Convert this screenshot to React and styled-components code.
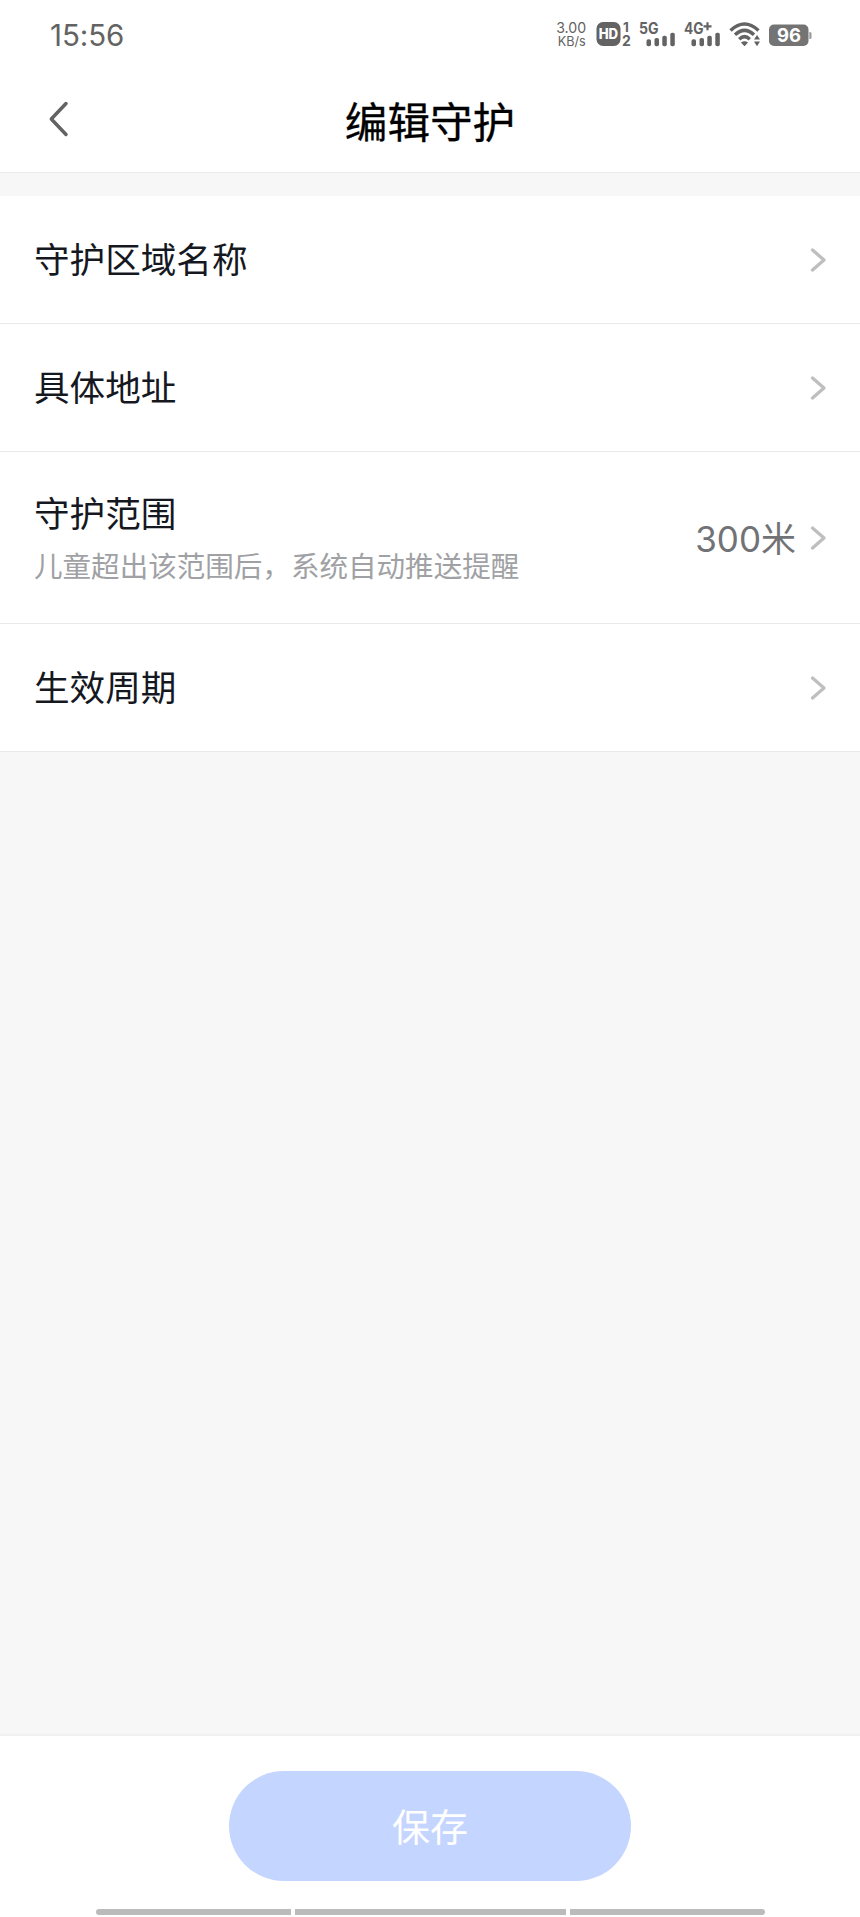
import React from "react";
import styled, { createGlobalStyle } from "styled-components";

const GlobalStyle = createGlobalStyle`
  * { box-sizing: border-box; }
  body {
    margin: 0;
    background: #fff;
    font-family: Inter, "Noto Sans CJK SC", sans-serif;
  }
`;

const Screen = styled.div`
  width: 860px;
  height: 1917px;
  display: flex;
  flex-direction: column;
  background: #f7f7f7;
  overflow: hidden;
`;

const StatusBar = styled.header`
  height: 70px;
  padding: 0 48px 3px 50px;
  display: flex;
  align-items: center;
  justify-content: space-between;
  background: #fff;
  color: #636363;
`;

const Clock = styled.time`
  font-size: 29.5px;
  line-height: 36px;
  letter-spacing: -0.1px;
  padding-top: 2px;
`;

const StatusIcons = styled.div`
  display: flex;
  align-items: center;
`;

const StatusIcon = styled.svg`
  display: block;
  flex: none;
  width: ${(p) => p.$width}px;
  height: 34px;
  margin-right: ${(p) => p.$gap || 0}px;
  fill: #636363;
  font-family: Inter, sans-serif;
`;

const NavBar = styled.nav`
  height: 103px;
  padding: 0 48px;
  display: grid;
  grid-template-columns: 60px 1fr 60px;
  align-items: center;
  background: #fff;
  border-bottom: 1px solid #ebebeb;
`;

const BackButton = styled.button`
  display: flex;
  padding: 0;
  margin-bottom: 5px;
  border: 0;
  background: none;
`;

const Title = styled.h1`
  margin: 0;
  padding-top: 3px;
  text-align: center;
  font-size: 42.6px;
  line-height: 60px;
  font-weight: 400;
  color: #000;
  -webkit-text-stroke: 0.3px #000;
`;

const SettingsList = styled.main`
  flex: 1;
  padding-top: 23px;
`;

const Row = styled.div`
  height: ${(p) => (p.$tall ? 172 : 128)}px;
  padding: 0 33px 0 34px;
  display: flex;
  align-items: center;
  background: #fff;
  border-bottom: 1px solid #e9e9e9;
`;

const RowText = styled.div`
  flex: 1;
  display: flex;
  flex-direction: column;
  gap: 7px;
  padding-top: 3px;
`;

const RowLabel = styled.span`
  font-size: 35.6px;
  line-height: 48px;
  color: #15181f;
`;

const RowHint = styled.span`
  font-size: 28.55px;
  line-height: 42px;
  color: #a0a1a4;
`;

const RowValue = styled.span`
  font-size: 35px;
  line-height: 48px;
  color: #717276;
  margin-right: 13px;
  padding-top: 2px;
`;

const Footer = styled.footer`
  height: 183px;
  padding-top: 35px;
  display: flex;
  flex-direction: column;
  align-items: center;
  justify-content: space-between;
  background: #fff;
  border-top: 2px solid #f1f1f1;
`;

const SaveButton = styled.button`
  width: 402px;
  height: 110px;
  padding: 1px 0 0;
  border: 0;
  border-radius: 55px;
  background: #c4d5ff;
  color: #fff;
  font-family: inherit;
  font-size: 38px;
  line-height: 56px;
`;

const HomeBars = styled.div`
  width: 669px;
  height: 8px;
  display: flex;
  gap: 4px;
`;

const HomeBar = styled.i`
  height: 6px;
  flex: ${(p) => (p.$main ? "1" : "0 0 195px")};
  background: #bbb;
  border-radius: ${(p) => p.$radius || "0"};
`;

const Chevron = () => (
  <svg width="18" height="26" viewBox="0 0 18 26" fill="none" stroke="#bfbfbf" strokeWidth="3.3" strokeLinecap="round" strokeLinejoin="round">
    <path d="M3.5 3 15 13 3.5 23" />
  </svg>
);

const Signal = ({ label, labelWidth, plus, gap }) => (
  <StatusIcon $width={38} $gap={gap} viewBox="0 0 38 34">
    <text x="0" y="16.5" fontSize="15.3" fontWeight="700" textLength={labelWidth} lengthAdjust="spacingAndGlyphs">{label}</text>
    {plus && <path d="M19.5 9.3h8M23.5 5.3v8" fill="none" stroke="#636363" strokeWidth="2.2" />}
    <rect x="7.5" y="22.3" width="4.5" height="7" rx="1.8" />
    <rect x="15.5" y="21" width="4.5" height="8.3" rx="1.8" />
    <rect x="23.3" y="18.8" width="4.5" height="10.5" rx="1.8" />
    <rect x="31.3" y="15.8" width="4.5" height="13.5" rx="1.8" />
  </StatusIcon>
);

const rows = [
  { label: "守护区域名称" },
  { label: "具体地址" },
  { label: "守护范围", hint: "儿童超出该范围后，系统自动推送提醒", value: "300米" },
  { label: "生效周期" },
];

export default function App() {
  return (
    <Screen lang="zh-CN">
      <GlobalStyle />
      <StatusBar>
        <Clock>15:56</Clock>
        <StatusIcons>
          <StatusIcon $width={32} $gap={8} viewBox="0 0 32 34">
            <text x="0.2" y="16" fontSize="14.5" textLength="30" lengthAdjust="spacingAndGlyphs">3.00</text>
            <text x="1.7" y="28.7" fontSize="13" textLength="28" lengthAdjust="spacingAndGlyphs">KB/s</text>
          </StatusIcon>
          <StatusIcon $width={36} $gap={7} viewBox="0 0 36 34">
            <rect x="0.5" y="5" width="24" height="24" rx="6.5" />
            <text x="2.7" y="22" fontSize="14" fontWeight="800" fill="#fff" textLength="19.5" lengthAdjust="spacingAndGlyphs">HD</text>
            <text x="27" y="14.7" fontSize="13.5" fontWeight="700">1</text>
            <text x="26" y="29.2" fontSize="14" fontWeight="700">2</text>
          </StatusIcon>
          <Signal label="5G" labelWidth={19.5} gap={7} />
          <Signal label="4G" labelWidth={19.5} plus gap={7} />
          <StatusIcon $width={34} $gap={6} viewBox="0 0 34 34">
            <g fill="none" stroke="#636363" strokeWidth="3.4">
              <path d="M1.5 13.4Q15.5 0.5 29.5 13.4" />
              <path d="M6 17.8Q15.5 9 25 17.8" />
              <path d="M10.2 22.2Q15.5 17 20.8 22.2" />
            </g>
            <path d="M12 25.5Q15.5 23.2 19 25.5L15.5 29.2Z" />
            <path d="M25 22.6 28 18 31 22.6ZM25 24.6H31L28 29.2Z" />
          </StatusIcon>
          <StatusIcon $width={43} viewBox="0 0 43 34">
            <rect x="0" y="7.5" width="39.5" height="21.5" rx="5" fill="#747474" />
            <path d="M40.3 15H41q1.5 0 1.5 1.5v4q0 1.5-1.5 1.5h-.7Z" fill="#999" />
            <text x="8" y="25.2" fontSize="19" fontWeight="700" fill="#fff" textLength="24" lengthAdjust="spacingAndGlyphs">96</text>
          </StatusIcon>
        </StatusIcons>
      </StatusBar>
      <NavBar>
        <BackButton aria-label="返回">
          <svg width="22" height="38" viewBox="0 0 22 38" fill="none" stroke="#636363" strokeWidth="3.5" strokeLinecap="round" strokeLinejoin="round">
            <path d="M18 3.5 3.3 19 18 34.5" />
          </svg>
        </BackButton>
        <Title>编辑守护</Title>
      </NavBar>
      <SettingsList>
        {rows.map((row) => (
          <Row key={row.label} $tall={Boolean(row.hint)}>
            <RowText>
              <RowLabel>{row.label}</RowLabel>
              {row.hint && <RowHint>{row.hint}</RowHint>}
            </RowText>
            {row.value && <RowValue>{row.value}</RowValue>}
            <Chevron />
          </Row>
        ))}
      </SettingsList>
      <Footer>
        <SaveButton>保存</SaveButton>
        <HomeBars>
          <HomeBar $radius="3px 0 0 3px" />
          <HomeBar $main />
          <HomeBar $radius="0 3px 3px 0" />
        </HomeBars>
      </Footer>
    </Screen>
  );
}
